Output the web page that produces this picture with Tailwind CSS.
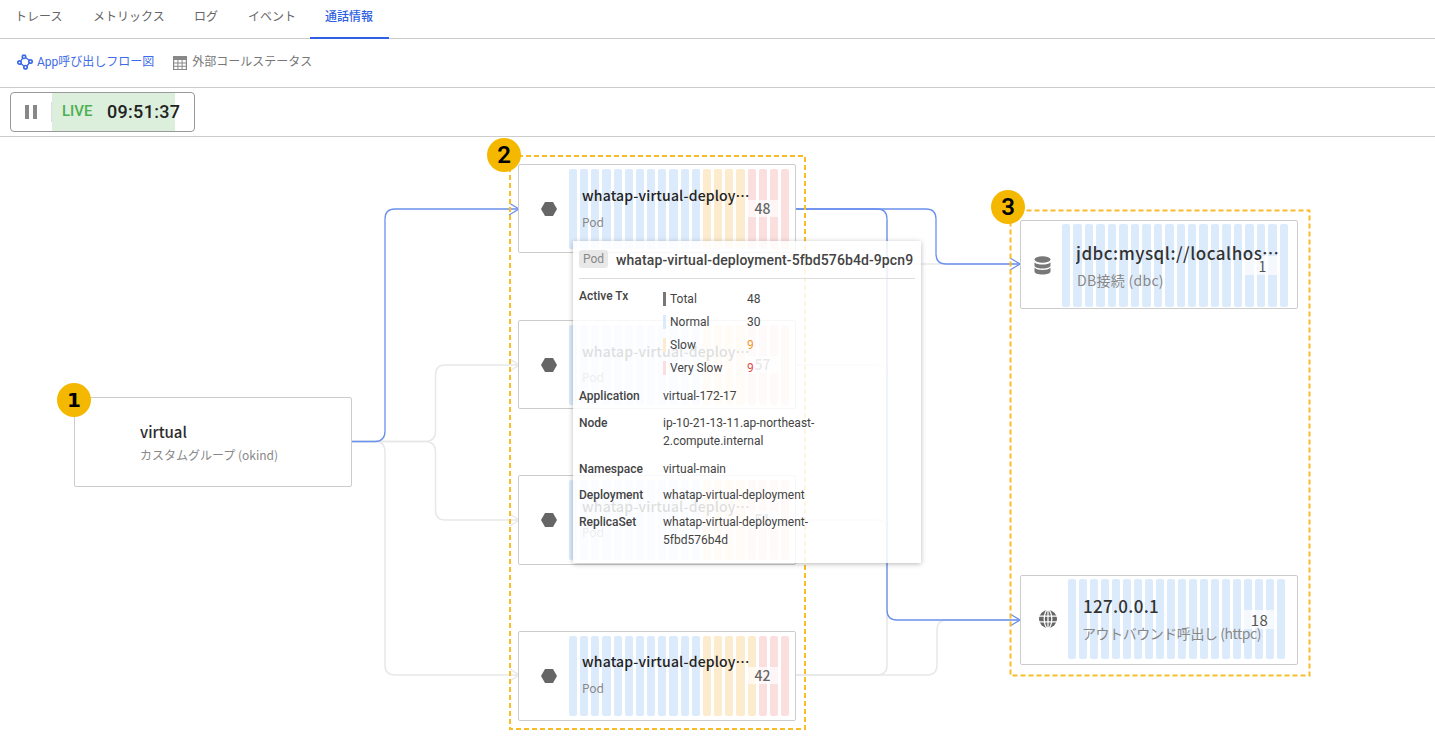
<!DOCTYPE html>
<html lang="ja">
<head>
<meta charset="utf-8">
<script src="https://cdn.jsdelivr.net/npm/@tailwindcss/browser@4"></script>
</head>
<body class="bg-white font-['Roboto','Noto_Sans_CJK_JP',sans-serif] text-[#333]">
<div class="w-[1435px] h-[754px] overflow-hidden flex flex-col">
  <div class="h-[39px] shrink-0 border-b border-[#ccc] flex text-xs text-[#666]">
    <div class="w-[78px] pl-[15px] h-[39px] pt-[9px] whitespace-nowrap">トレース</div>
    <div class="w-[101px] pl-[15px] h-[39px] pt-[9px] whitespace-nowrap">メトリックス</div>
    <div class="w-[54px] pl-[15px] h-[39px] pt-[9px] whitespace-nowrap">ログ</div>
    <div class="w-[77px] pl-[15px] h-[39px] pt-[9px] whitespace-nowrap">イベント</div>
    <div class="w-[79px] pl-[15px] h-[39px] pt-[9px] whitespace-nowrap font-medium text-[#2f5fe3] border-b-2 border-[#2f5fe3]">通話情報</div>
  </div>
  <div class="h-[49px] shrink-0 border-b border-[#ccc] flex items-center pl-[17px] pb-[2px] text-xs">
    <div class="flex items-center gap-[4px] text-[#3d6be6]">
      <svg width="16" height="16" viewBox="0 0 16 16" fill="none" stroke="#3d6be6" stroke-width="1.7"><circle cx="7" cy="2.800" r="1.700"/><circle cx="2.500" cy="8.500" r="1.700"/><circle cx="13.500" cy="7.500" r="1.700"/><circle cx="8.500" cy="13.200" r="1.700"/><path stroke-width="1.300" d="M5.700 4 3.700 7.200M8.500 3.500 12.200 6.300M4 9.500 7 12.200M12.300 9 10 12"/></svg>
      <span>App呼び出しフロー図</span>
    </div>
    <div class="flex items-center gap-[5px] text-[#777] ml-[19px]">
      <svg width="14" height="14" viewBox="0 0 14 14" class="mt-[2px]"><path fill="#888" d="M0 0h14v14H0z"/><path fill="#fff" d="M1.200 4h3.200v2.400H1.200zM5.400 4h3.200v2.400H5.400zM9.600 4h3.200v2.400H9.600zM1.200 7.400h3.200v2.400H1.200zM5.400 7.400h3.200v2.400H5.400zM9.600 7.400h3.200v2.400H9.600zM1.200 10.800h3.200V13H1.200zM5.400 10.800h3.200V13H5.400zM9.600 10.800h3.200V13H9.600z"/></svg>
      <span>外部コールステータス</span>
    </div>
  </div>
  <div class="h-[49px] shrink-0 border-b border-[#ccc] pt-[4px] pl-[10px]">
    <div class="w-[185px] h-[40px] border border-[#999] rounded-[4px] flex overflow-hidden">
      <div class="w-[41px] shrink-0 flex items-center justify-center gap-[4px] border-r border-[#ddd] my-[9px]">
        <div class="w-[4px] h-[14px] bg-[#888]"></div><div class="w-[4px] h-[14px] bg-[#888]"></div>
      </div>
      <div class="w-[123px] shrink-0 bg-[#dcefdc] flex items-center pl-[10px] pb-[1px] whitespace-nowrap">
        <span class="text-[15px] font-medium text-[#4caf50] w-[45px] shrink-0">LIVE</span>
        <span class="text-lg font-medium text-[#222] tracking-[0.3px] shrink-0">09:51:37</span>
      </div>
    </div>
  </div>
  <div class="relative flex-1">
    <svg class="absolute left-0 top-0" width="1435" height="617" viewBox="0 137 1435 617" fill="none" stroke-width="1.500">
      <g stroke="#e8e8e8">
        <path d="M352 441.500H425Q435.500 441.500 435.500 431V375Q435.500 365 445 365H519"/>
        <path d="M510 359 519 365 510 371"/>
        <path d="M352 441.500H425Q435.500 441.500 435.500 452V510Q435.500 520 445 520H519"/>
        <path d="M510 514 519 520 510 526"/>
        <path d="M352 441.500H375Q385 441.500 385 452V665Q385 675 395 675H519"/>
        <path d="M510 669 519 675 510 681"/>
        <path d="M796 675H877Q887 675 887 665V220"/>
        <path d="M796 675H927Q937 675 937 665V630Q937 620 947 620H1020"/>
        <path d="M796 365H877Q887 365 887 375V620"/>
        <path d="M796 520H877Q887 520 887 530V620"/>
        <path d="M887 264H1020"/>
      </g>
      <g stroke="#6a90ee" stroke-width="1.300">
        <path d="M352 441.500H375Q385 441.500 385 431V219Q385 209 395 209H519"/>
        <path d="M509 203 519 209 509 215"/>
        <path d="M796 209H926Q936 209 936 219V254Q936 264 946 264H1020"/>
        <path d="M1010 258 1020 264 1010 270"/>
        <path d="M796 209H877Q887 209 887 219V610Q887 620 897 620H1020"/>
        <path d="M1010 614 1020 620 1010 626"/>
      </g>
    </svg>

    <!-- node 1 -->
    <div class="absolute left-[74px] top-[260px] w-[278px] h-[90px] bg-white border border-[#ccc] rounded-[2px] pl-[65px] pt-[24px] font-['Noto_Sans_CJK_JP',sans-serif]">
      <div class="text-[15px] leading-[20px] font-medium text-[#2c2c2c]">virtual</div>
      <div class="text-xs leading-[16px] mt-[5px] text-[#888]">カスタムグループ (okind)</div>
    </div>

    <!-- pod 1 -->
    <div class="absolute left-[518px] top-[27px] w-[278px] h-[89px] bg-white border border-[#ccc] rounded-[2px] font-['Noto_Sans_CJK_JP',sans-serif]">
      <svg class="absolute left-[22px] top-[37px]" width="16" height="14" viewBox="0 0 16 14"><path fill="#666" d="M4 0h8l4 7-4 7H4L0 7z"/></svg>
      <div class="absolute left-[50px] top-[4px] w-[220px] h-[80px] flex gap-[3px]">
        <div class="flex-1 rounded-[2px] bg-[#dcebfc]"></div><div class="flex-1 rounded-[2px] bg-[#dcebfc]"></div><div class="flex-1 rounded-[2px] bg-[#dcebfc]"></div><div class="flex-1 rounded-[2px] bg-[#dcebfc]"></div><div class="flex-1 rounded-[2px] bg-[#dcebfc]"></div><div class="flex-1 rounded-[2px] bg-[#dcebfc]"></div><div class="flex-1 rounded-[2px] bg-[#dcebfc]"></div><div class="flex-1 rounded-[2px] bg-[#dcebfc]"></div><div class="flex-1 rounded-[2px] bg-[#dcebfc]"></div><div class="flex-1 rounded-[2px] bg-[#dcebfc]"></div><div class="flex-1 rounded-[2px] bg-[#dcebfc]"></div><div class="flex-1 rounded-[2px] bg-[#dcebfc]"></div>
        <div class="flex-1 rounded-[2px] bg-[#fcebcd]"></div><div class="flex-1 rounded-[2px] bg-[#fcebcd]"></div><div class="flex-1 rounded-[2px] bg-[#fcebcd]"></div><div class="flex-1 rounded-[2px] bg-[#fcebcd]"></div>
        <div class="flex-1 rounded-[2px] bg-[#fbdfdf]"></div><div class="flex-1 rounded-[2px] bg-[#fbdfdf]"></div><div class="flex-1 rounded-[2px] bg-[#fbdfdf]"></div><div class="flex-1 rounded-[2px] bg-[#fbdfdf]"></div>
      </div>
      <div class="absolute left-[63px] top-[20px] w-[170px] truncate text-sm leading-[20px] font-medium text-[#222] tracking-[0.18px]">whatap-virtual-deployment-5fbd576b4d-9pcn9</div>
      <div class="absolute left-[63px] top-[49px] text-xs leading-[16px] text-[#888]">Pod</div>
      <div class="absolute left-[226px] top-[35px] w-[35px] h-[17px] bg-white/70 text-center text-sm leading-[17px] font-medium text-[#666]">48</div>
    </div>

    <!-- pod 2 -->
    <div class="absolute left-[518px] top-[183px] w-[278px] h-[89px] bg-white border border-[#ccc] rounded-[2px] font-['Noto_Sans_CJK_JP',sans-serif]">
      <svg class="absolute left-[22px] top-[37px]" width="16" height="14" viewBox="0 0 16 14"><path fill="#666" d="M4 0h8l4 7-4 7H4L0 7z"/></svg>
      <div class="absolute left-[50px] top-[4px] w-[220px] h-[80px] flex gap-[3px]">
        <div class="flex-1 rounded-[2px] bg-[#dcebfc]"></div><div class="flex-1 rounded-[2px] bg-[#dcebfc]"></div><div class="flex-1 rounded-[2px] bg-[#dcebfc]"></div><div class="flex-1 rounded-[2px] bg-[#dcebfc]"></div><div class="flex-1 rounded-[2px] bg-[#dcebfc]"></div><div class="flex-1 rounded-[2px] bg-[#dcebfc]"></div><div class="flex-1 rounded-[2px] bg-[#dcebfc]"></div><div class="flex-1 rounded-[2px] bg-[#dcebfc]"></div><div class="flex-1 rounded-[2px] bg-[#dcebfc]"></div><div class="flex-1 rounded-[2px] bg-[#dcebfc]"></div><div class="flex-1 rounded-[2px] bg-[#dcebfc]"></div><div class="flex-1 rounded-[2px] bg-[#dcebfc]"></div>
        <div class="flex-1 rounded-[2px] bg-[#fcebcd]"></div><div class="flex-1 rounded-[2px] bg-[#fcebcd]"></div><div class="flex-1 rounded-[2px] bg-[#fcebcd]"></div><div class="flex-1 rounded-[2px] bg-[#fcebcd]"></div>
        <div class="flex-1 rounded-[2px] bg-[#fbdfdf]"></div><div class="flex-1 rounded-[2px] bg-[#fbdfdf]"></div><div class="flex-1 rounded-[2px] bg-[#fbdfdf]"></div><div class="flex-1 rounded-[2px] bg-[#fbdfdf]"></div>
      </div>
      <div class="absolute left-[63px] top-[20px] w-[170px] truncate text-sm leading-[20px] font-medium text-[#222] tracking-[0.18px]">whatap-virtual-deployment-5fbd576b4d-9pcn9</div>
      <div class="absolute left-[63px] top-[48px] text-xs leading-[16px] text-[#888]">Pod</div>
      <div class="absolute left-[226px] top-[35px] w-[35px] h-[17px] bg-white/70 text-center text-sm leading-[17px] font-medium text-[#666]">57</div>
    </div>

    <!-- pod 3 -->
    <div class="absolute left-[518px] top-[338px] w-[278px] h-[90px] bg-white border border-[#ccc] rounded-[2px] font-['Noto_Sans_CJK_JP',sans-serif]">
      <svg class="absolute left-[22px] top-[37px]" width="16" height="14" viewBox="0 0 16 14"><path fill="#666" d="M4 0h8l4 7-4 7H4L0 7z"/></svg>
      <div class="absolute left-[50px] top-[4px] w-[220px] h-[80px] flex gap-[3px]">
        <div class="flex-1 rounded-[2px] bg-[#dcebfc]"></div><div class="flex-1 rounded-[2px] bg-[#dcebfc]"></div><div class="flex-1 rounded-[2px] bg-[#dcebfc]"></div><div class="flex-1 rounded-[2px] bg-[#dcebfc]"></div><div class="flex-1 rounded-[2px] bg-[#dcebfc]"></div><div class="flex-1 rounded-[2px] bg-[#dcebfc]"></div><div class="flex-1 rounded-[2px] bg-[#dcebfc]"></div><div class="flex-1 rounded-[2px] bg-[#dcebfc]"></div><div class="flex-1 rounded-[2px] bg-[#dcebfc]"></div><div class="flex-1 rounded-[2px] bg-[#dcebfc]"></div><div class="flex-1 rounded-[2px] bg-[#dcebfc]"></div><div class="flex-1 rounded-[2px] bg-[#dcebfc]"></div>
        <div class="flex-1 rounded-[2px] bg-[#fcebcd]"></div><div class="flex-1 rounded-[2px] bg-[#fcebcd]"></div><div class="flex-1 rounded-[2px] bg-[#fcebcd]"></div><div class="flex-1 rounded-[2px] bg-[#fcebcd]"></div>
        <div class="flex-1 rounded-[2px] bg-[#fbdfdf]"></div><div class="flex-1 rounded-[2px] bg-[#fbdfdf]"></div><div class="flex-1 rounded-[2px] bg-[#fbdfdf]"></div><div class="flex-1 rounded-[2px] bg-[#fbdfdf]"></div>
      </div>
      <div class="absolute left-[63px] top-[20px] w-[170px] truncate text-sm leading-[20px] font-medium text-[#222] tracking-[0.18px]">whatap-virtual-deployment-5fbd576b4d-9pcn9</div>
      <div class="absolute left-[63px] top-[48px] text-xs leading-[16px] text-[#888]">Pod</div>
      <div class="absolute left-[226px] top-[35px] w-[35px] h-[17px] bg-white/70 text-center text-sm leading-[17px] font-medium text-[#666]">51</div>
    </div>

    <!-- pod 4 -->
    <div class="absolute left-[518px] top-[494px] w-[278px] h-[90px] bg-white border border-[#ccc] rounded-[2px] font-['Noto_Sans_CJK_JP',sans-serif]">
      <svg class="absolute left-[22px] top-[37px]" width="16" height="14" viewBox="0 0 16 14"><path fill="#666" d="M4 0h8l4 7-4 7H4L0 7z"/></svg>
      <div class="absolute left-[50px] top-[4px] w-[220px] h-[80px] flex gap-[3px]">
        <div class="flex-1 rounded-[2px] bg-[#dcebfc]"></div><div class="flex-1 rounded-[2px] bg-[#dcebfc]"></div><div class="flex-1 rounded-[2px] bg-[#dcebfc]"></div><div class="flex-1 rounded-[2px] bg-[#dcebfc]"></div><div class="flex-1 rounded-[2px] bg-[#dcebfc]"></div><div class="flex-1 rounded-[2px] bg-[#dcebfc]"></div><div class="flex-1 rounded-[2px] bg-[#dcebfc]"></div><div class="flex-1 rounded-[2px] bg-[#dcebfc]"></div><div class="flex-1 rounded-[2px] bg-[#dcebfc]"></div><div class="flex-1 rounded-[2px] bg-[#dcebfc]"></div><div class="flex-1 rounded-[2px] bg-[#dcebfc]"></div><div class="flex-1 rounded-[2px] bg-[#dcebfc]"></div>
        <div class="flex-1 rounded-[2px] bg-[#fcebcd]"></div><div class="flex-1 rounded-[2px] bg-[#fcebcd]"></div><div class="flex-1 rounded-[2px] bg-[#fcebcd]"></div><div class="flex-1 rounded-[2px] bg-[#fcebcd]"></div><div class="flex-1 rounded-[2px] bg-[#fcebcd]"></div>
        <div class="flex-1 rounded-[2px] bg-[#fbdfdf]"></div><div class="flex-1 rounded-[2px] bg-[#fbdfdf]"></div><div class="flex-1 rounded-[2px] bg-[#fbdfdf]"></div>
      </div>
      <div class="absolute left-[63px] top-[19px] w-[170px] truncate text-sm leading-[20px] font-medium text-[#222] tracking-[0.18px]">whatap-virtual-deployment-5fbd576b4d-9pcn9</div>
      <div class="absolute left-[63px] top-[48px] text-xs leading-[16px] text-[#888]">Pod</div>
      <div class="absolute left-[226px] top-[35px] w-[35px] h-[17px] bg-white/70 text-center text-sm leading-[17px] font-medium text-[#666]">42</div>
    </div>

    <!-- db node -->
    <div class="absolute left-[1020px] top-[83px] w-[278px] h-[89px] bg-white border border-[#ccc] rounded-[2px] font-['Noto_Sans_CJK_JP',sans-serif]">
      <svg class="absolute left-[13px] top-[35px]" width="17" height="19" viewBox="0 0 17 19"><g fill="#777"><ellipse cx="8.500" cy="3.500" rx="8" ry="3.200"/><path d="M.5 6.200C2 8 5 8.600 8.500 8.600s6.500-.6 8-2.400v3.300c0 1.700-3.600 3-8 3s-8-1.300-8-3z"/><path d="M.5 11.600C2 13.400 5 14 8.500 14s6.500-.6 8-2.400v3.900c0 1.700-3.600 3-8 3s-8-1.300-8-3z"/></g></svg>
      <div class="absolute left-[41px] top-[3px] w-[226px] h-[83px] flex gap-[3px]">
        <div class="flex-1 rounded-[2px] bg-[#dcebfc]"></div><div class="flex-1 rounded-[2px] bg-[#dcebfc]"></div><div class="flex-1 rounded-[2px] bg-[#dcebfc]"></div><div class="flex-1 rounded-[2px] bg-[#dcebfc]"></div><div class="flex-1 rounded-[2px] bg-[#dcebfc]"></div><div class="flex-1 rounded-[2px] bg-[#dcebfc]"></div><div class="flex-1 rounded-[2px] bg-[#dcebfc]"></div><div class="flex-1 rounded-[2px] bg-[#dcebfc]"></div><div class="flex-1 rounded-[2px] bg-[#dcebfc]"></div><div class="flex-1 rounded-[2px] bg-[#dcebfc]"></div><div class="flex-1 rounded-[2px] bg-[#dcebfc]"></div><div class="flex-1 rounded-[2px] bg-[#dcebfc]"></div><div class="flex-1 rounded-[2px] bg-[#dcebfc]"></div><div class="flex-1 rounded-[2px] bg-[#dcebfc]"></div><div class="flex-1 rounded-[2px] bg-[#dcebfc]"></div><div class="flex-1 rounded-[2px] bg-[#dcebfc]"></div><div class="flex-1 rounded-[2px] bg-[#dcebfc]"></div><div class="flex-1 rounded-[2px] bg-[#dcebfc]"></div><div class="flex-1 rounded-[2px] bg-[#dcebfc]"></div><div class="flex-1 rounded-[2px] bg-[#dcebfc]"></div>
      </div>
      <div class="absolute left-[224px] top-[35px] w-[35px] h-[19px] bg-white/70 text-center text-sm leading-[20px] text-[#555]">1</div>
      <div class="absolute left-[55px] top-[20px] w-[204px] truncate text-[17px] leading-[24px] font-medium text-[#333] tracking-[0.5px]">jdbc:mysql://localhost:3306/whatap</div>
      <div class="absolute left-[56px] top-[49px] text-sm leading-[20px] text-[#888] tracking-[0.3px]">DB接続 (dbc)</div>
    </div>

    <!-- http node -->
    <div class="absolute left-[1020px] top-[438px] w-[278px] h-[90px] bg-white border border-[#ccc] rounded-[2px] font-['Noto_Sans_CJK_JP',sans-serif]">
      <svg class="absolute left-[18px] top-[34px]" width="18" height="18" viewBox="0 0 19 19"><circle cx="9.500" cy="9.500" r="9.500" fill="#666"/><g fill="none" stroke="#fff" stroke-width="1.300"><ellipse cx="9.500" cy="9.500" rx="4" ry="9.500"/><path d="M9.500 0v19M0 6.500h19M0 12.500h19"/></g></svg>
      <div class="absolute left-[47px] top-[3px] w-[217px] h-[80px] flex gap-[3px]">
        <div class="flex-1 rounded-[2px] bg-[#dcebfc]"></div><div class="flex-1 rounded-[2px] bg-[#dcebfc]"></div><div class="flex-1 rounded-[2px] bg-[#dcebfc]"></div><div class="flex-1 rounded-[2px] bg-[#dcebfc]"></div><div class="flex-1 rounded-[2px] bg-[#dcebfc]"></div><div class="flex-1 rounded-[2px] bg-[#dcebfc]"></div><div class="flex-1 rounded-[2px] bg-[#dcebfc]"></div><div class="flex-1 rounded-[2px] bg-[#dcebfc]"></div><div class="flex-1 rounded-[2px] bg-[#dcebfc]"></div><div class="flex-1 rounded-[2px] bg-[#dcebfc]"></div><div class="flex-1 rounded-[2px] bg-[#dcebfc]"></div><div class="flex-1 rounded-[2px] bg-[#dcebfc]"></div><div class="flex-1 rounded-[2px] bg-[#dcebfc]"></div><div class="flex-1 rounded-[2px] bg-[#dcebfc]"></div><div class="flex-1 rounded-[2px] bg-[#dcebfc]"></div><div class="flex-1 rounded-[2px] bg-[#dcebfc]"></div><div class="flex-1 rounded-[2px] bg-[#dcebfc]"></div><div class="flex-1 rounded-[2px] bg-[#dcebfc]"></div><div class="flex-1 rounded-[2px] bg-[#dcebfc]"></div><div class="flex-1 rounded-[2px] bg-[#dcebfc]"></div>
      </div>
      <div class="absolute left-[222px] top-[34px] w-[33px] h-[19px] bg-white/70 text-center text-[15px] leading-[19px] text-[#555] tracking-[0.5px]">18</div>
      <div class="absolute left-[62px] top-[18px] text-[17px] leading-[24px] font-medium text-[#333] tracking-[0.3px]">127.0.0.1</div>
      <div class="absolute left-[61px] top-[47px] whitespace-nowrap text-sm leading-[20px] text-[#888] tracking-[-0.45px]">アウトバウンド呼出し (httpc)</div>
    </div>

    <!-- highlight frames -->
    <svg class="absolute left-0 top-0" width="1435" height="617" viewBox="0 137 1435 617" fill="none" stroke="#f9bb28" stroke-width="2" stroke-dasharray="5 3">
      <rect x="510" y="156" width="295" height="573"/>
      <rect x="1010.500" y="210.500" width="299" height="465"/>
    </svg>

    <!-- tooltip -->
    <div class="absolute left-[573px] top-[104px] w-[348px] h-[322px] bg-white/85 shadow-[0_1px_5px_rgba(0,0,0,0.28)] px-[6px] pt-[9px] text-xs text-[#444]">
      <div class="flex items-center h-[18px]">
        <span class="w-[29px] h-[18px] rounded-[3px] bg-[#e8e8e8] text-[#888] text-center leading-[18px]">Pod</span>
        <span class="ml-[8px] mt-[1px] text-sm font-medium text-[#444] whitespace-nowrap tracking-[0.1px]">whatap-virtual-deployment-5fbd576b4d-9pcn9</span>
      </div>
      <div class="border-t border-[#ddd] mt-[10px] w-[336px]"></div>
      <div class="flex mt-[8px]">
        <div class="w-[84px] shrink-0 leading-[18px] font-medium">Active Tx</div>
        <div class="flex flex-col gap-[5px] mt-[3px] w-[130px]">
          <div class="flex items-center h-[18px]"><span class="w-[3px] h-[14px] bg-[#777]"></span><span class="ml-[4px] w-[77px]">Total</span><span>48</span></div>
          <div class="flex items-center h-[18px]"><span class="w-[3px] h-[14px] bg-[#dcebfc]"></span><span class="ml-[4px] w-[77px]">Normal</span><span>30</span></div>
          <div class="flex items-center h-[18px]"><span class="w-[3px] h-[14px] bg-[#fcebcd]"></span><span class="ml-[4px] w-[77px]">Slow</span><span class="text-[#f0962e]">9</span></div>
          <div class="flex items-center h-[18px]"><span class="w-[3px] h-[14px] bg-[#fbdfdf]"></span><span class="ml-[4px] w-[77px]">Very Slow</span><span class="text-[#e04b4b]">9</span></div>
        </div>
      </div>
      <div class="flex mt-[10px] leading-[18px]"><div class="w-[84px] shrink-0 font-medium">Application</div><div>virtual-172-17</div></div>
      <div class="flex mt-[9px] leading-[18px]"><div class="w-[84px] shrink-0 font-medium">Node</div><div class="w-[160px]">ip-10-21-13-11.ap-northeast-<br>2.compute.internal</div></div>
      <div class="flex mt-[10px] leading-[18px]"><div class="w-[84px] shrink-0 font-medium">Namespace</div><div>virtual-main</div></div>
      <div class="flex mt-[8px] leading-[18px]"><div class="w-[84px] shrink-0 font-medium">Deployment</div><div>whatap-virtual-deployment</div></div>
      <div class="flex mt-[9px] leading-[18px]"><div class="w-[84px] shrink-0 font-medium">ReplicaSet</div><div class="w-[160px]">whatap-virtual-deployment-<br>5fbd576b4d</div></div>
    </div>

    <!-- numbered badges -->
    <div class="absolute left-[57px] top-[246px] w-[34px] h-[34px] rounded-full bg-[#f5b800] text-black text-center text-[20px] leading-[34px] font-bold font-['DejaVu_Sans',sans-serif]">1</div>
    <div class="absolute left-[487px] top-[1px] w-[34px] h-[34px] rounded-full bg-[#f5b800] text-black text-center text-[24px] leading-[34px] font-semibold">2</div>
    <div class="absolute left-[991px] top-[53px] w-[34px] h-[34px] rounded-full bg-[#f5b800] text-black text-center text-[24px] leading-[34px] font-semibold">3</div>
  </div>
</div>
</body>
</html>
